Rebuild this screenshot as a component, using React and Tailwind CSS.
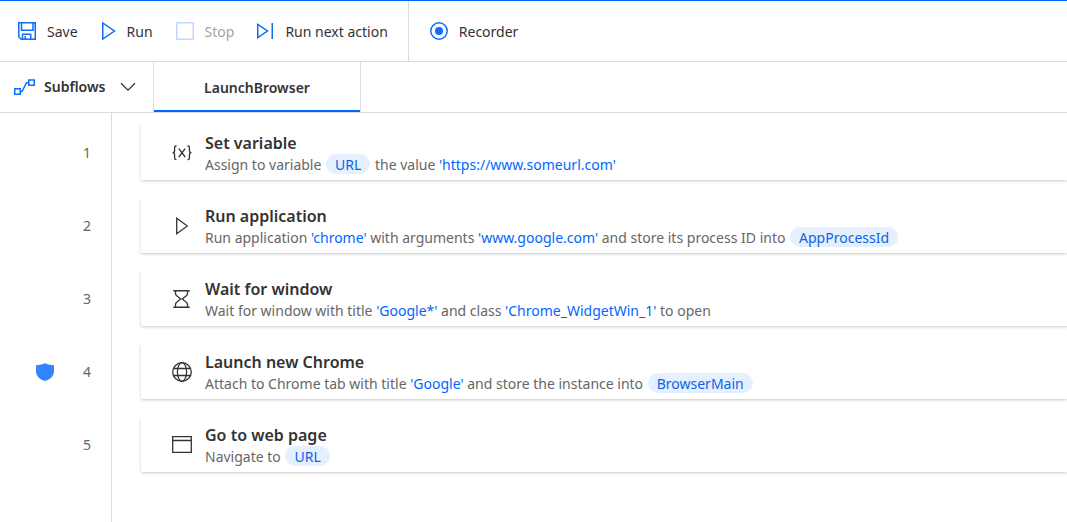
import React from "react";

function Icon({ w, h, className = "", children }) {
  return (
    <svg
      width={w}
      height={h}
      viewBox={`0 0 ${w} ${h}`}
      fill="none"
      stroke="currentColor"
      strokeWidth="1.5"
      className={`shrink-0 ${className}`}
      aria-hidden="true"
    >
      {children}
    </svg>
  );
}

const SaveIcon = () => (
  <Icon w={18} h={18}>
    <path d="M.75 .75H17.25V17.25H3.2L.75 14.8Z" />
    <path d="M3.5 .75V8.25H15V.75M4.5 17.25V12.25H12.75V17.25M7.25 14V17.25" />
  </Icon>
);

const RunIcon = () => (
  <Icon w={15} h={18}>
    <path d="M1.75 1V17L13.5 9Z" />
  </Icon>
);

const StopIcon = () => (
  <Icon w={18} h={18} className="text-[#c0d9ff]">
    <path d="M.75 .75H17.25V17.25H.75Z" />
  </Icon>
);

const NextIcon = () => (
  <Icon w={17} h={18}>
    <path d="M.75 2.5V15.5L10.5 9ZM15.25 1V17" />
  </Icon>
);

const RecorderIcon = () => (
  <Icon w={18} h={18}>
    <circle cx="9" cy="9" r="8.2" />
    <circle cx="9" cy="9" r="4" fill="currentColor" stroke="none" />
  </Icon>
);

const SubflowIcon = () => (
  <Icon w={21} h={16} className="text-[#0f6cff]">
    <path d="M.75 9.75H6.25V15.25H.75ZM14.75 1H20.25V6.25H14.75ZM6.25 12.5H8L12.5 3.75H14.75" />
  </Icon>
);

const VariableIcon = () => (
  <Icon w={20} h={16}>
    <path
      strokeWidth="1.3"
      d="M4.5 1H4Q2.6 1 2.6 2.5V5.5Q2.6 7.7 .6 7.7Q2.6 7.7 2.6 10V13Q2.6 14.6 4 14.6H4.5M15.5 1H16Q17.4 1 17.4 2.5V5.5Q17.4 7.7 19.4 7.7Q17.4 7.7 17.4 10V13Q17.4 14.6 16 14.6H15.5M6.8 3.6L13.2 12M13.2 3.6L6.8 12"
    />
  </Icon>
);

const PlayIcon = () => (
  <Icon w={12} h={18}>
    <path strokeWidth="1.3" d="M.7 1.3V16.7L11.4 9Z" />
  </Icon>
);

const HourglassIcon = () => (
  <Icon w={18} h={18}>
    <path
      strokeWidth="1.3"
      d="M.3 .75H16.7M.3 17.25H16.7M2.5 .75V3.5Q2.5 5 4 6L7.7 9L4 12Q2.5 13 2.5 14.5V17.25M14.5 .75V3.5Q14.5 5 13 6L9.3 9L13 12Q14.5 13 14.5 14.5V17.25"
    />
  </Icon>
);

const GlobeIcon = () => (
  <Icon w={20} h={20}>
    <g strokeWidth="1.3">
      <circle cx="10" cy="10" r="9.3" />
      <ellipse cx="10" cy="10" rx="4.6" ry="9.3" />
      <path d="M1.5 6.5H18.5M1.5 13.5H18.5" />
    </g>
  </Icon>
);

const WindowIcon = () => (
  <Icon w={20} h={17}>
    <path strokeWidth="1.3" d="M.7 .7H19.3V16.3H.7ZM.7 4.5H19.3" />
  </Icon>
);

const ShieldIcon = () => (
  <svg width="18" height="18" viewBox="0 0 18 18" fill="#3385ff" role="img" aria-label="Runs with a browser instance">
    <path d="M9 0C11 1.4 13.8 2.2 18 2.2V8C18 13 14.5 16.3 9 18C3.5 16.3 0 13 0 8V2.2C4.2 2.2 7 1.4 9 0Z" />
  </svg>
);

const Chip = ({ children }) => (
  <span className="mx-px inline-block h-5 rounded-full bg-[#e5f0ff] px-[9px] text-[#0f62e6]">
    {children}
  </span>
);

const Value = ({ children }) => <span className="text-[#0066ff]">{children}</span>;

const steps = [
  {
    title: "Set variable",
    icon: <VariableIcon />,
    text: (
      <>
        Assign to variable <Chip>URL</Chip> the value <Value>'https://www.someurl.com'</Value>
      </>
    ),
  },
  {
    title: "Run application",
    icon: <PlayIcon />,
    text: (
      <>
        Run application <Value>'chrome'</Value> with arguments <Value>'www.google.com'</Value> and
        store its process ID into <Chip>AppProcessId</Chip>
      </>
    ),
  },
  {
    title: "Wait for window",
    icon: <HourglassIcon />,
    text: (
      <>
        Wait for window with title <Value>'Google*'</Value> and class{" "}
        <Value>'Chrome_WidgetWin_1'</Value> to open
      </>
    ),
  },
  {
    title: "Launch new Chrome",
    icon: <GlobeIcon />,
    shield: true,
    text: (
      <>
        Attach to Chrome tab with title <Value>'Google'</Value> and store the instance into{" "}
        <Chip>BrowserMain</Chip>
      </>
    ),
  },
  {
    title: "Go to web page",
    icon: <WindowIcon />,
    text: (
      <>
        Navigate to <Chip>URL</Chip>
      </>
    ),
  },
];

function ToolButton({ icon, disabled, children }) {
  return (
    <button
      type="button"
      disabled={disabled}
      className="flex items-center gap-[11px] text-[#0f6cff] disabled:text-[#a3a3a3]"
    >
      {icon}
      <span className={disabled ? "pt-0.5" : "pt-0.5 text-[#333333]"}>{children}</span>
    </button>
  );
}

export default function App() {
  return (
    <div className="flex min-h-screen flex-col overflow-x-hidden border-t border-[#0066ff] bg-white font-['Noto_Sans','Open_Sans',sans-serif] text-sm text-[#333333]">
      <header className="flex h-[61px] border-b border-[#dcdcdc]">
        <div className="flex items-center gap-[23px] border-r border-[#dcdcdc] pr-5 pl-[18px]">
          <ToolButton icon={<SaveIcon />}>Save</ToolButton>
          <ToolButton icon={<RunIcon />}>Run</ToolButton>
          <ToolButton icon={<StopIcon />} disabled>
            Stop
          </ToolButton>
          <ToolButton icon={<NextIcon />}>Run next action</ToolButton>
        </div>
        <div className="flex items-center pl-[21px]">
          <ToolButton icon={<RecorderIcon />}>Recorder</ToolButton>
        </div>
      </header>

      <nav className="flex h-[51px] border-b border-[#dcdcdc] font-semibold">
        <button type="button" className="flex w-[153px] items-center gap-[9px] pl-[14px]">
          <SubflowIcon />
          Subflows
          <Icon w={16} h={10} className="ml-[5px]">
            <path strokeWidth="1.3" d="M1 1.2L8 8.2L15 1.2" />
          </Icon>
        </button>
        <div className="flex border-x border-[#dcdcdc]">
          <button type="button" className="w-[206px] border-b-2 border-[#0066ff] pt-1">
            LaunchBrowser
          </button>
        </div>
      </nav>

      <main className="flex grow">
        <ol className="grow bg-linear-to-r from-[#dcdcdc] to-[#dcdcdc] bg-[length:1px_100%] bg-[position:111px_0] bg-no-repeat pt-3">
          {steps.map((step, i) => (
            <li key={step.title} className="flex h-[73px] items-start">
              <div className="flex h-[55px] w-[141px] shrink-0 items-center">
                <div className="w-[77px] pl-9">{step.shield && <ShieldIcon />}</div>
                <span className="w-5 text-center text-[#666666]">{i + 1}</span>
              </div>
              <article className="flex h-[55px] grow items-center rounded-l-xs shadow-[0_1px_3px_rgba(0,0,0,0.22)] [clip-path:inset(0_0_-4px_-3px)]">
                <div className="flex w-16 justify-center pl-[18px]">{step.icon}</div>
                <div className="min-w-0 pt-0.5 whitespace-nowrap">
                  <h2 className="text-base leading-[22px] font-semibold">{step.title}</h2>
                  <p className="leading-[21px] text-[#666666]">{step.text}</p>
                </div>
              </article>
            </li>
          ))}
        </ol>
      </main>
    </div>
  );
}
